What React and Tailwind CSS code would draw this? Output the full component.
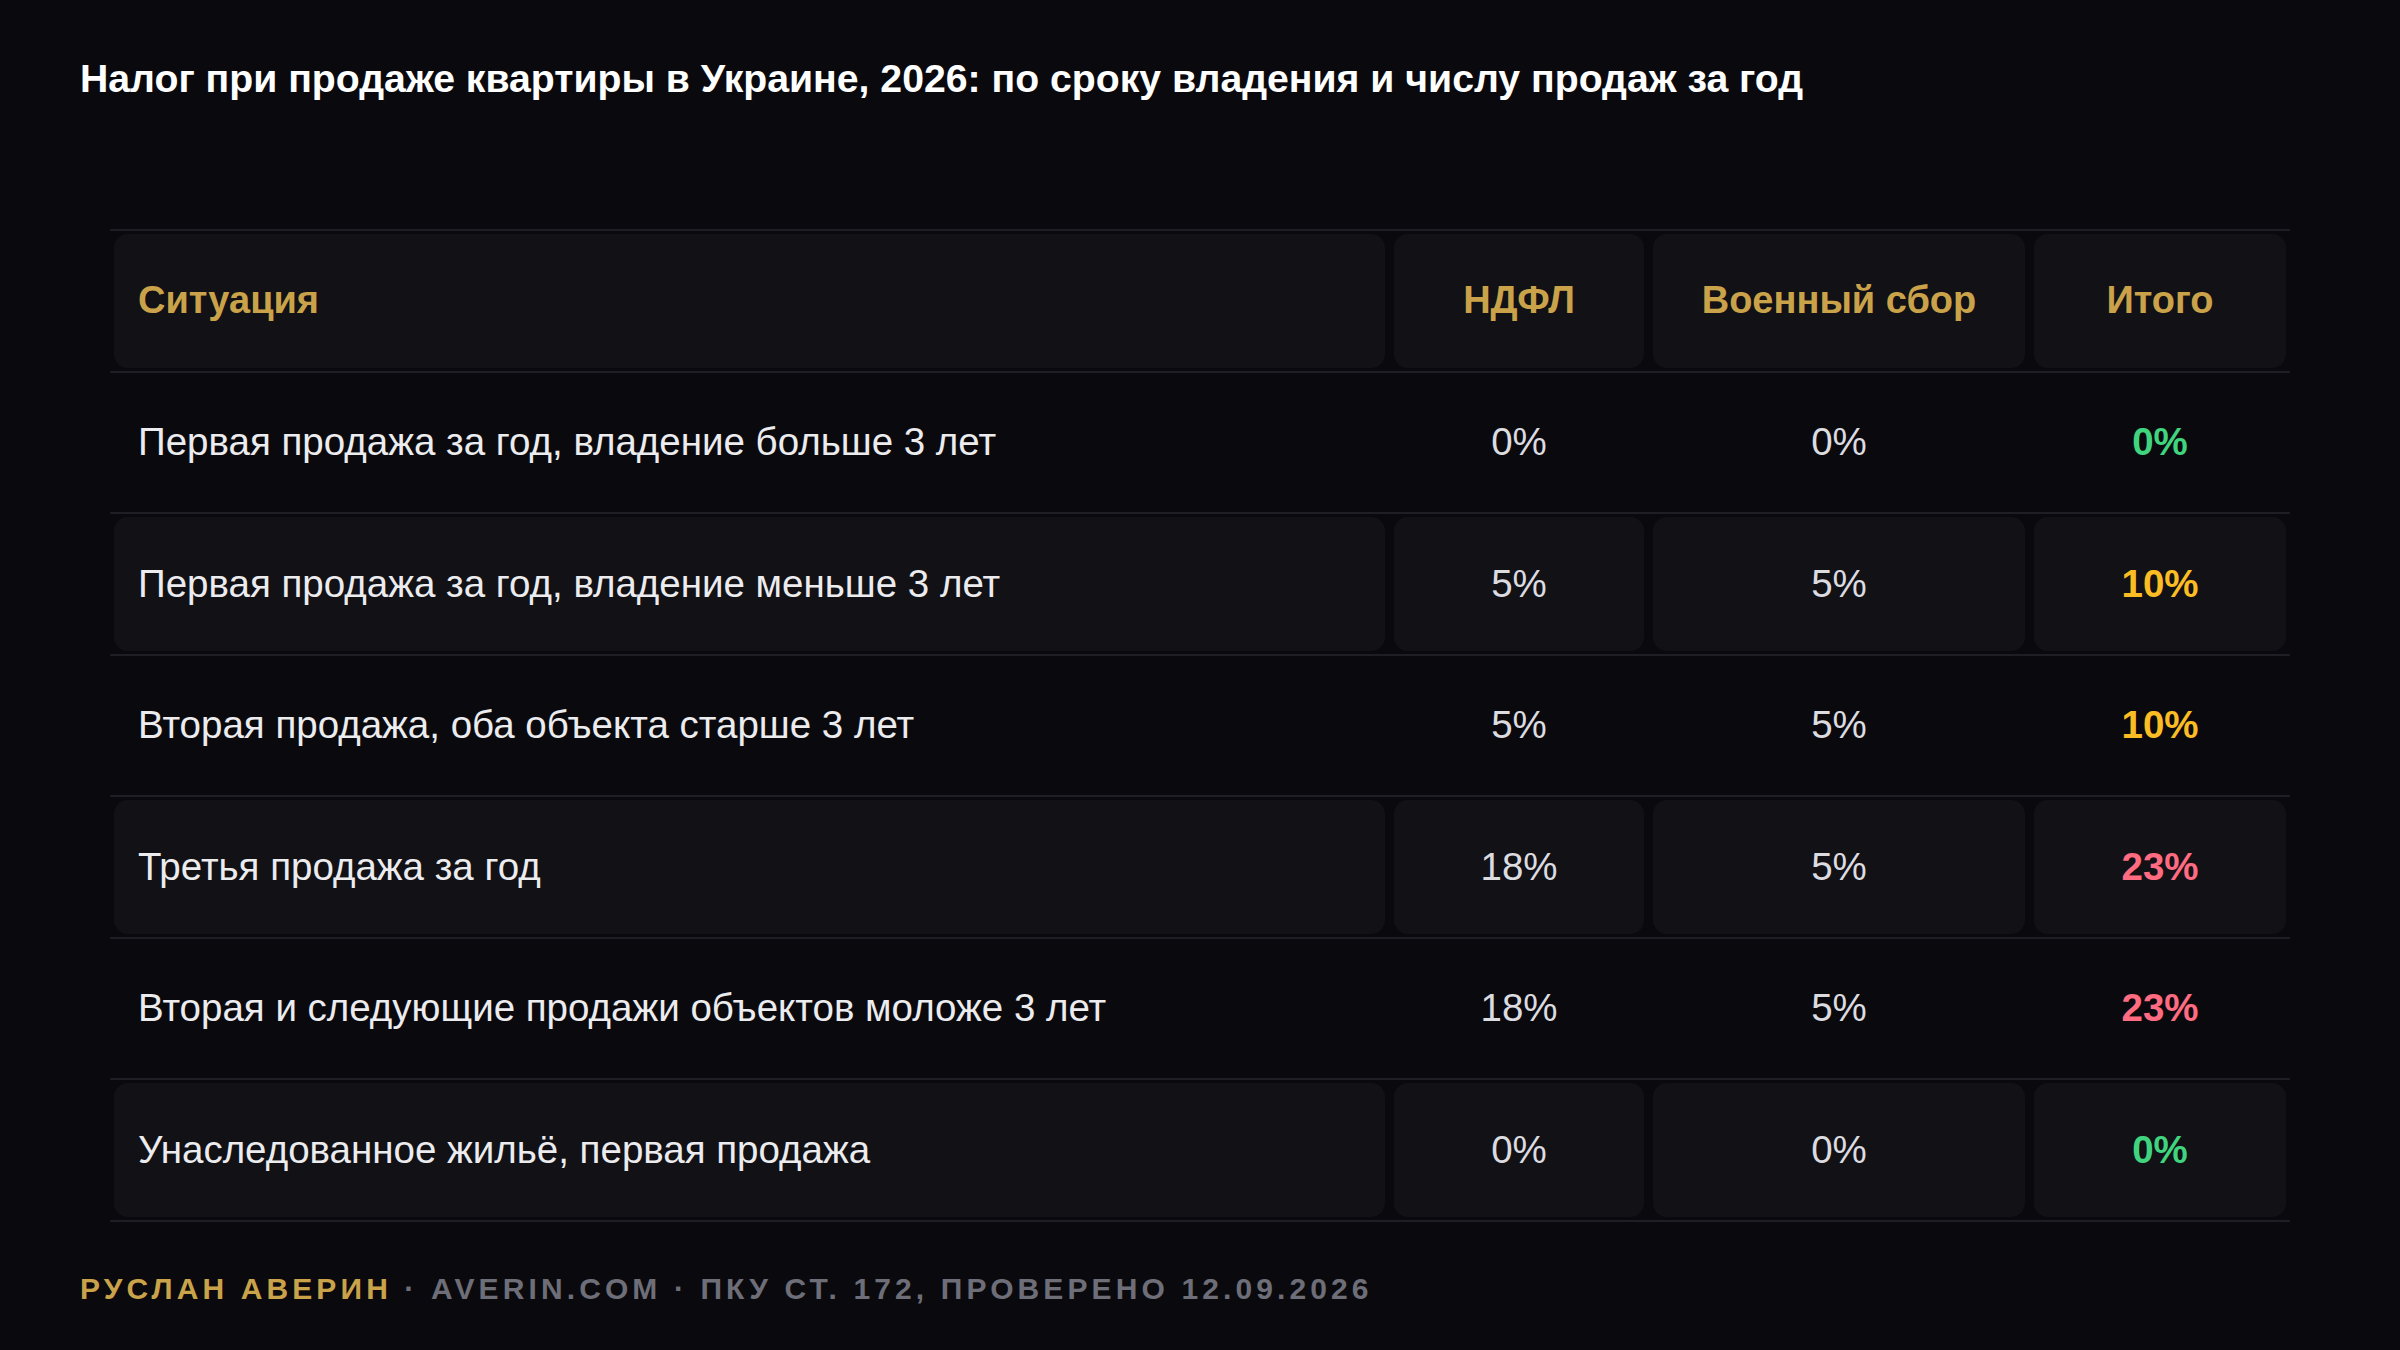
import React from "react";

// Tax on selling an apartment in Ukraine — summary table
const rows = [
  { label: "Первая продажа за год, владение больше 3 лет", ndfl: "0%", mil: "0%", total: "0%", tone: "green" },
  { label: "Первая продажа за год, владение меньше 3 лет", ndfl: "5%", mil: "5%", total: "10%", tone: "yellow" },
  { label: "Вторая продажа, оба объекта старше 3 лет", ndfl: "5%", mil: "5%", total: "10%", tone: "yellow" },
  { label: "Третья продажа за год", ndfl: "18%", mil: "5%", total: "23%", tone: "red" },
  { label: "Вторая и следующие продажи объектов моложе 3 лет", ndfl: "18%", mil: "5%", total: "23%", tone: "red" },
  { label: "Унаследованное жильё, первая продажа", ndfl: "0%", mil: "0%", total: "0%", tone: "green" },
];

const toneClass = {
  green: "text-[#40d47e]",
  yellow: "text-[#fbbd23]",
  red: "text-[#ff6b81]",
};

const Row = ({ filled, children }) => (
  <div className="grid grid-cols-[1271px_250px_372px_252px] gap-x-[9px] px-[4px] py-[3px] border-b-2 border-[#1e1e24]">
    {React.Children.map(children, (child) => (
      <div
        className={
          "h-[133.5px] rounded-[14px] flex items-center " +
          (filled ? "bg-[#111116]" : "bg-transparent")
        }
      >
        {child}
      </div>
    ))}
  </div>
);

export default function App() {
  return (
    <div
      className="w-[2400px] h-[1350px] bg-[#0a0a0e] flex flex-col overflow-hidden"
      style={{ fontFamily: '"Liberation Sans", Arial, sans-serif' }}
    >
      {/* Title */}
      <h1 className="pl-[80px] pt-[57px] text-[39.2px] leading-[44px] font-bold text-white">
        Налог при продаже квартиры в Украине, 2026: по сроку владения и числу продаж за год
      </h1>

      {/* Table */}
      <div className="mt-[128px] ml-[110px] w-[2180px] border-t-2 border-[#1e1e24]">
        <Row filled>
          <span className="pl-[24px] text-[38px] font-bold text-[#c9a24a]">Ситуация</span>
          <span className="w-full text-center text-[38px] font-bold text-[#c9a24a]">НДФЛ</span>
          <span className="w-full text-center text-[38px] font-bold text-[#c9a24a]">Военный сбор</span>
          <span className="w-full text-center text-[38px] font-bold text-[#c9a24a]">Итого</span>
        </Row>
        {rows.map((r, idx) => (
          <Row key={idx} filled={idx % 2 === 1}>
            <span className="pl-[24px] text-[38.5px] text-[#ececef]">{r.label}</span>
            <span className="w-full text-center text-[38.5px] text-[#dcdce0]">{r.ndfl}</span>
            <span className="w-full text-center text-[38.5px] text-[#dcdce0]">{r.mil}</span>
            <span className={"w-full text-center text-[38.5px] font-bold " + toneClass[r.tone]}>
              {r.total}
            </span>
          </Row>
        ))}
      </div>

      {/* Footer */}
      <div className="pl-[80px] mt-[49px] text-[30px] leading-[36px] font-bold tracking-[0.137em] uppercase text-[#6e6e78]">
        <span className="text-[#c9a24a]">Руслан Аверин</span>
        <span> · averin.com · ПКУ ст. 172, проверено 12.09.2026</span>
      </div>
    </div>
  );
}
